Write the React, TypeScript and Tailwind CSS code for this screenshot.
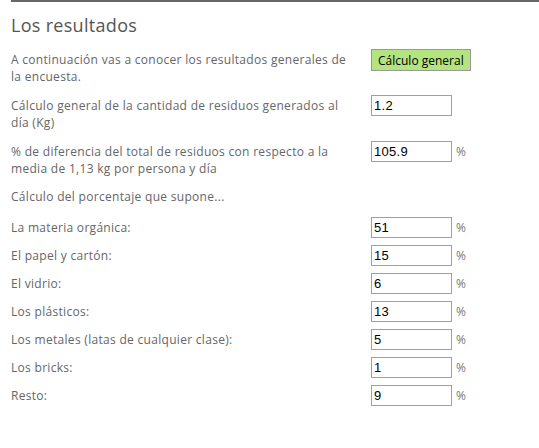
const materials = [
  { label: 'La materia orgánica:', value: '51' },
  { label: 'El papel y cartón:', value: '15' },
  { label: 'El vidrio:', value: '6' },
  { label: 'Los plásticos:', value: '13' },
  { label: 'Los metales (latas de cualquier clase):', value: '5' },
  { label: 'Los bricks:', value: '1' },
  { label: 'Resto:', value: '9' }
]

function ValueBox({ value, unit }: { value: string; unit?: boolean }) {
  return (
    <div className="flex items-start">
      <input
        readOnly
        value={value}
        className="w-[81px] h-[21px] border border-[#a0a0a0] bg-white px-[2px] text-[13px] text-black outline-none font-['Liberation_Sans',sans-serif]"
      />
      {unit && <span className="ml-[4px] mt-[2px] text-[12px] text-[#777]">%</span>}
    </div>
  )
}

export default function App() {
  return (
    <div className="min-h-[448px] bg-white pl-[11px] font-['Open_Sans',Arial,sans-serif]">
      <div className="border-t-2 border-[#666] pt-[11px]">
        <h2 className="text-[18px] leading-[24px] tracking-[0.3px] text-[#555]">Los resultados</h2>

        <div className="mt-[12px] flex flex-col text-[12px] leading-[17px] tracking-[0.3px] text-[#666]">
          <div className="flex items-start">
            <p className="mt-[2px] w-[348px]">
              A continuación vas a conocer los resultados generales de la encuesta.
            </p>
            <button className="ml-[12px] h-[22px] border border-[#999] bg-[#b3e47f] px-[6px] text-[12px] tracking-normal text-black">
              Cálculo general
            </button>
          </div>

          <div className="mt-[10px] flex items-start">
            <p className="mt-[2px] w-[348px]">
              Cálculo general de la cantidad de residuos generados al día (Kg)
            </p>
            <div className="ml-[12px]">
              <ValueBox value="1.2" />
            </div>
          </div>

          <div className="mt-[10px] flex items-start">
            <p className="mt-[2px] w-[348px]">
              % de diferencia del total de residuos con respecto a la media de 1,13 kg por persona y día
            </p>
            <div className="ml-[12px]">
              <ValueBox value="105.9" unit />
            </div>
          </div>

          <p className="mt-[11px]">Cálculo del porcentaje que supone...</p>

          <div className="mt-[12px] flex flex-col gap-[7px]">
            {materials.map((m) => (
              <div key={m.label} className="flex items-start">
                <p className="mt-[2px] w-[348px]">{m.label}</p>
                <div className="ml-[12px]">
                  <ValueBox value={m.value} unit />
                </div>
              </div>
            ))}
          </div>
        </div>
      </div>
    </div>
  )
}
